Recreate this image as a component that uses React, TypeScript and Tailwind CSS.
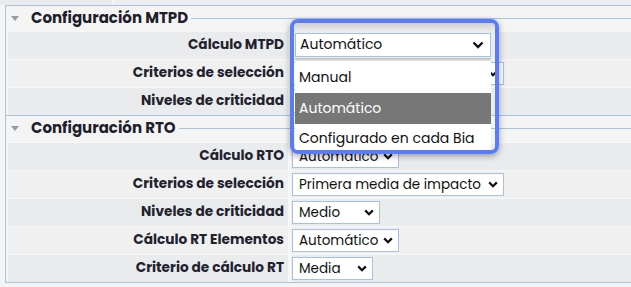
import React from "react";

const font = { fontFamily: "Poppins, Inter, 'Noto Sans', sans-serif" };

function Chevron({ big = false }: { big?: boolean }) {
  return big ? (
    <svg width="12" height="8" viewBox="0 0 12 8" className="shrink-0">
      <path d="M1.5 1.5 L6 6 L10.5 1.5" fill="none" stroke="#111" strokeWidth="2.4" />
    </svg>
  ) : (
    <svg width="10" height="7" viewBox="0 0 10 7" className="shrink-0">
      <path d="M1.2 1.4 L5 5.2 L8.8 1.4" fill="none" stroke="#111" strokeWidth="2.2" />
    </svg>
  );
}

function Select({ value, w }: { value: string; w: string }) {
  return (
    <div
      className={`${w} h-[23px] bg-white border border-[#a6c2e2] flex items-center justify-between pl-[6px] pr-[5px] text-[13.5px] text-[#111] leading-none`}
    >
      <span className="whitespace-nowrap">{value}</span>
      <Chevron />
    </div>
  );
}

function Legend({ title }: { title: string }) {
  return (
    <div className="h-[25px] flex items-center">
      <span className="ml-[5px] w-0 h-0 border-l-[4px] border-r-[4px] border-t-[5px] border-l-transparent border-r-transparent border-t-[#9a9a9a]" />
      <span className="ml-[12px] text-[15px] font-bold text-[#1e1e2c] whitespace-nowrap">{title}</span>
      <span className="ml-[3px] flex-1 h-px bg-[#a9c4e0]" />
    </div>
  );
}

type Row = { label: string; value?: string; w?: string };

function Rows({ rows }: { rows: Row[] }) {
  return (
    <div className="ml-[2px]">
      {rows.map((r, i) => (
        <div key={i} className="h-[28px] pt-px flex bg-[#f7f7f7]">
          <div
            className={`w-[280px] flex items-center justify-end pr-[4px] text-[13.7px] font-bold text-[#22222f] ${i % 2 === 0 ? "bg-[#e9ebec]" : "bg-[#f0f0f0]"}`}
          >
            {r.label}
          </div>
          <div className={`ml-[3px] flex-1 flex items-center pl-px ${i % 2 === 0 ? "bg-[#e9ebec]" : "bg-[#f0f0f0]"}`}>
            {r.w && <Select value={r.value ?? ""} w={r.w} />}
          </div>
        </div>
      ))}
    </div>
  );
}

export default function App() {
  // the first block's selects sit under the open list, only their edges show
  const mtpd: Row[] = [
    { label: "Cálculo MTPD", w: "w-[196px]" },
    { label: "Criterios de selección", w: "w-[212px]" },
    { label: "Niveles de criticidad", w: "w-[88px]" },
  ];
  const rto: Row[] = [
    { label: "Cálculo RTO", value: "Automático", w: "w-[107px]" },
    { label: "Criterios de selección", value: "Primera media de impacto", w: "w-[212px]" },
    { label: "Niveles de criticidad", value: "Medio", w: "w-[88px]" },
    { label: "Cálculo RT Elementos", value: "Automático", w: "w-[107px]" },
    { label: "Criterio de cálculo RT", value: "Media", w: "w-[81px]" },
  ];

  return (
    <div className="w-[631px] h-[287px] bg-[#f4f4f4] relative overflow-hidden" style={font}>
      <div className="flex h-[5px]">
        <div className="w-[112px] bg-[#e9ebec]" />
        <div className="w-[3px]" />
        <div className="flex-1 bg-[#eceeef]" />
      </div>
      <div className="ml-[5px] border-l border-t border-[#a9c4e0]">
        <Legend title="Configuración MTPD" />
        <Rows rows={mtpd} />
        <div className="h-px bg-[#a9c4e0]" />
        <Legend title="Configuración RTO" />
        <div className="h-px" />
        <Rows rows={rto} />
        <div className="h-px bg-[#a9c4e0]" />
      </div>

      {/* open dropdown, highlighted */}
      <div className="absolute left-[290px] top-[19px] w-[209px] h-[135px] border-4 border-[#5a7cfb] rounded-[8px] shadow-[0_2px_6px_rgba(0,0,0,0.35)] overflow-hidden">
        <div className="h-[8px] bg-gradient-to-b from-[#cfcfcf] to-[#ececec]" />
        <div className="h-[27px] bg-[#e9ebec] flex items-center pl-px">
          <div className="w-[196px] h-[24px] bg-white border border-[#a6c2e2] flex items-center justify-between pl-[4px] pr-[6px] text-[14px] text-[#111]">
            <span>Automático</span>
            <Chevron big />
          </div>
        </div>
        <div className="ml-px w-[196px]">
          <div className="h-[3px] bg-gradient-to-b from-[#bdbdbd] to-[#e5e5e5]" />
          <div className="bg-white text-[14px] text-[#111]">
            <div className="h-[32px] flex items-center pl-[4px]">Manual</div>
            <div className="h-[31px] flex items-center pl-[4px] bg-[#777777] text-white">Automático</div>
            <div className="h-[31px] flex items-center pl-[4px] pb-[2px]">Configurado en cada Bia</div>
          </div>
        </div>
      </div>
    </div>
  );
}
